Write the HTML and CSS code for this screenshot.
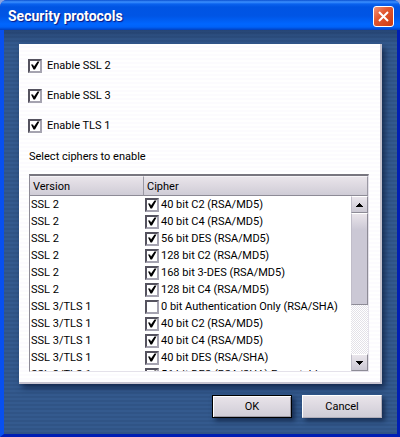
FILE: index.html
```html
<!DOCTYPE html>
<html lang="en">
<head>
  <meta charset="UTF-8" />
  <meta name="viewport" content="width=device-width, initial-scale=1.0"/>
  <title>Security protocols</title>
  <link rel="stylesheet" href="styles.css">
</head>
<body>
  <div class="dialog">
    <div class="titlebar">
      <h1>Security protocols</h1>
      <button type="button" class="close" aria-label="Close">
        <svg width="11" height="11" viewBox="0 0 11 11"><path d="M1 1 L10 10 M10 1 L1 10" stroke="#fff" stroke-width="2" fill="none"/></svg>
      </button>
    </div>

    <form class="content">
      <div class="panel">
        <div class="protocols">
          <label><input type="checkbox" checked> Enable SSL 2</label>
          <label><input type="checkbox" checked> Enable SSL 3</label>
          <label><input type="checkbox" checked> Enable TLS 1</label>
        </div>

        <p>Select ciphers to enable</p>

        <div class="list">
          <table>
            <thead>
              <tr><th class="version">Version</th><th>Cipher</th></tr>
            </thead>
            <tbody>
              <tr><td>SSL 2</td><td><label><input type="checkbox" checked>40 bit C2 (RSA/MD5)</label></td></tr>
              <tr><td>SSL 2</td><td><label><input type="checkbox" checked>40 bit C4 (RSA/MD5)</label></td></tr>
              <tr><td>SSL 2</td><td><label><input type="checkbox" checked>56 bit DES (RSA/MD5)</label></td></tr>
              <tr><td>SSL 2</td><td><label><input type="checkbox" checked>128 bit C2 (RSA/MD5)</label></td></tr>
              <tr><td>SSL 2</td><td><label><input type="checkbox" checked>168 bit 3-DES (RSA/MD5)</label></td></tr>
              <tr><td>SSL 2</td><td><label><input type="checkbox" checked>128 bit C4 (RSA/MD5)</label></td></tr>
              <tr><td>SSL 3/TLS 1</td><td><label><input type="checkbox">0 bit Authentication Only (RSA/SHA)</label></td></tr>
              <tr><td>SSL 3/TLS 1</td><td><label><input type="checkbox" checked>40 bit C2 (RSA/MD5)</label></td></tr>
              <tr><td>SSL 3/TLS 1</td><td><label><input type="checkbox" checked>40 bit C4 (RSA/MD5)</label></td></tr>
              <tr><td>SSL 3/TLS 1</td><td><label><input type="checkbox" checked>40 bit DES (RSA/SHA)</label></td></tr>
              <tr><td>SSL 3/TLS 1</td><td><label><input type="checkbox" checked>56 bit DES (RSA/SHA) Exportable</label></td></tr>
            </tbody>
          </table>
          <div class="scrollbar">
            <button type="button" aria-label="Scroll up">
              <svg width="7" height="4" viewBox="0 0 7 4" shape-rendering="crispEdges"><path d="M3 0h1v1h1v1h1v1h1v1H0V3h1V2h1V1h1z"/></svg>
            </button>
            <div class="thumb"></div>
            <button type="button" class="down" aria-label="Scroll down">
              <svg width="7" height="4" viewBox="0 0 7 4" shape-rendering="crispEdges"><path d="M0 0h7v1H6v1H5v1H4v1H3V3H2V2H1V1H0z"/></svg>
            </button>
          </div>
        </div>
      </div>

      <div class="buttons">
        <button type="submit" class="default">OK</button>
        <button type="button">Cancel</button>
      </div>
    </form>
  </div>
</body>
</html>
```
FILE: styles.css
```css
* {
  box-sizing: border-box;
}

body {
  margin: 0;
  background: #8ba3e0;
  font-family: Roboto, sans-serif;
  font-size: 11px;
  line-height: 17px;
  color: #000;
}

button,
input {
  font: inherit;
  margin: 0;
  padding: 0;
}

.dialog {
  display: flex;
  flex-direction: column;
  height: 100vh;
  min-height: 320px;
  border-radius: 7px 7px 0 0;
  overflow: hidden;
  background: #0842d8;
}

/* title bar */
.titlebar {
  display: flex;
  align-items: center;
  justify-content: space-between;
  height: 30px;
  padding: 3px 6px 0 8px;
  background: linear-gradient(#0a4fd0 0, #3c90ff 2px, #0a62ee 4px, #0054e3 7px, #0055e5 16px, #0066ff 24px, #0062f8 27px, #0040c0 30px);
}

.titlebar h1 {
  margin: 0;
  font-size: 14px;
  font-weight: bold;
  color: #fff;
  text-shadow: 1px 1px 1px #0a1883;
}

.close {
  display: flex;
  align-items: center;
  justify-content: center;
  width: 21px;
  height: 21px;
  border: 1px solid #fff;
  border-radius: 3px;
  background: linear-gradient(135deg, #f0937a, #e25730 40%, #cc3a10);
}

/* striped body */
.content {
  flex: 1;
  min-height: 0;
  display: flex;
  flex-direction: column;
  margin: 0;
  padding: 14px 15px 16px;
  border: solid;
  border-width: 0 3px 3px 4px;
  border-color: #0842d8 #001eb4 #001eb4 #0850f0;
  background:
    linear-gradient(rgba(20, 40, 80, 0.4), rgba(20, 40, 80, 0) 14px),
    repeating-linear-gradient(#345a8e 0, #345a8e 2px, #305486 2px, #305486 4px);
}

.panel {
  flex: 1;
  min-height: 0;
  display: flex;
  flex-direction: column;
  padding: 13px 11px 10px 9px;
  border: solid #c8c5d0;
  border-width: 0 2px 2px 0;
  background: repeating-linear-gradient(#fff 0, #fff 2px, #fcfbfe 2px, #fcfbfe 4px);
  box-shadow: 3px 4px 6px rgba(10, 25, 55, 0.7);
}

.protocols {
  display: flex;
  flex-direction: column;
  gap: 13px;
}

.protocols label {
  display: flex;
  align-items: center;
  gap: 5px;
}

.panel p {
  margin: 14px 1px 9px;
}

input[type="checkbox"] {
  appearance: none;
  flex: none;
  width: 14px;
  height: 14px;
  border: 2px solid;
  border-color: #55535f #a5a3b0 #a5a3b0 #55535f;
  background: #fff;
}

input[type="checkbox"]:checked::before {
  content: "";
  display: block;
  width: 10px;
  height: 10px;
  background: #000;
  clip-path: polygon(10% 40%, 30% 40%, 40% 60%, 75% 10%, 95% 10%, 50% 90%, 35% 90%);
}

/* cipher list */
.list {
  position: relative;
  flex: 1;
  min-height: 0;
  overflow: hidden;
  margin-left: 1px;
  border: solid;
  border-width: 2px 1px 1px;
  border-color: #77757f #e4e1ea #e4e1ea #8d8b96;
  background: #fff;
}

table {
  width: 100%;
  table-layout: fixed;
  border-collapse: separate;
  border-spacing: 0;
  white-space: nowrap;
}

th {
  height: 20px;
  padding: 0 3px;
  border: solid;
  border-width: 1px 1px 1px 0;
  border-color: #f4f2f6 #9a98a3 #8d8b96;
  background: linear-gradient(#e9e4ea, #cfccd6);
  font-weight: normal;
  text-align: left;
}

.version {
  width: 114px;
}

td {
  height: 17px;
  padding: 0 1px;
}

td label {
  display: flex;
  align-items: center;
  gap: 2px;
}

.scrollbar {
  position: absolute;
  top: 20px;
  right: 0;
  bottom: 0;
  display: flex;
  flex-direction: column;
  width: 17px;
  background: repeating-conic-gradient(#e3e1e8 0 25%, #fff 0 50%) 0 0 / 2px 2px;
}

.scrollbar button,
.thumb {
  border: 1px solid;
  border-color: #fff #8d8b96 #8d8b96 #c0bdc9;
  background: linear-gradient(#eae6ec, #cbc8d3);
}

.scrollbar button {
  display: flex;
  align-items: center;
  justify-content: center;
  height: 17px;
}

.thumb {
  height: 92px;
  background: linear-gradient(#e9e4ea, #cbc8d5 16px);
}

.scrollbar .down {
  margin-top: auto;
}

/* buttons */
.buttons {
  display: flex;
  justify-content: flex-end;
  gap: 10px;
  margin-top: 11px;
}

.buttons button {
  width: 80px;
  height: 23px;
  border: 1px solid;
  border-color: #fff #b0adb8 #b0adb8 #fff;
  background: linear-gradient(#e9e4ea, #cfccd6);
  box-shadow: 3px 3px 5px rgba(10, 25, 55, 0.7);
}

.buttons .default {
  border-color: #000;
  box-shadow: inset 1px 1px #fff, inset -1px -1px #a09da8, 3px 3px 5px rgba(10, 25, 55, 0.7);
}
```
